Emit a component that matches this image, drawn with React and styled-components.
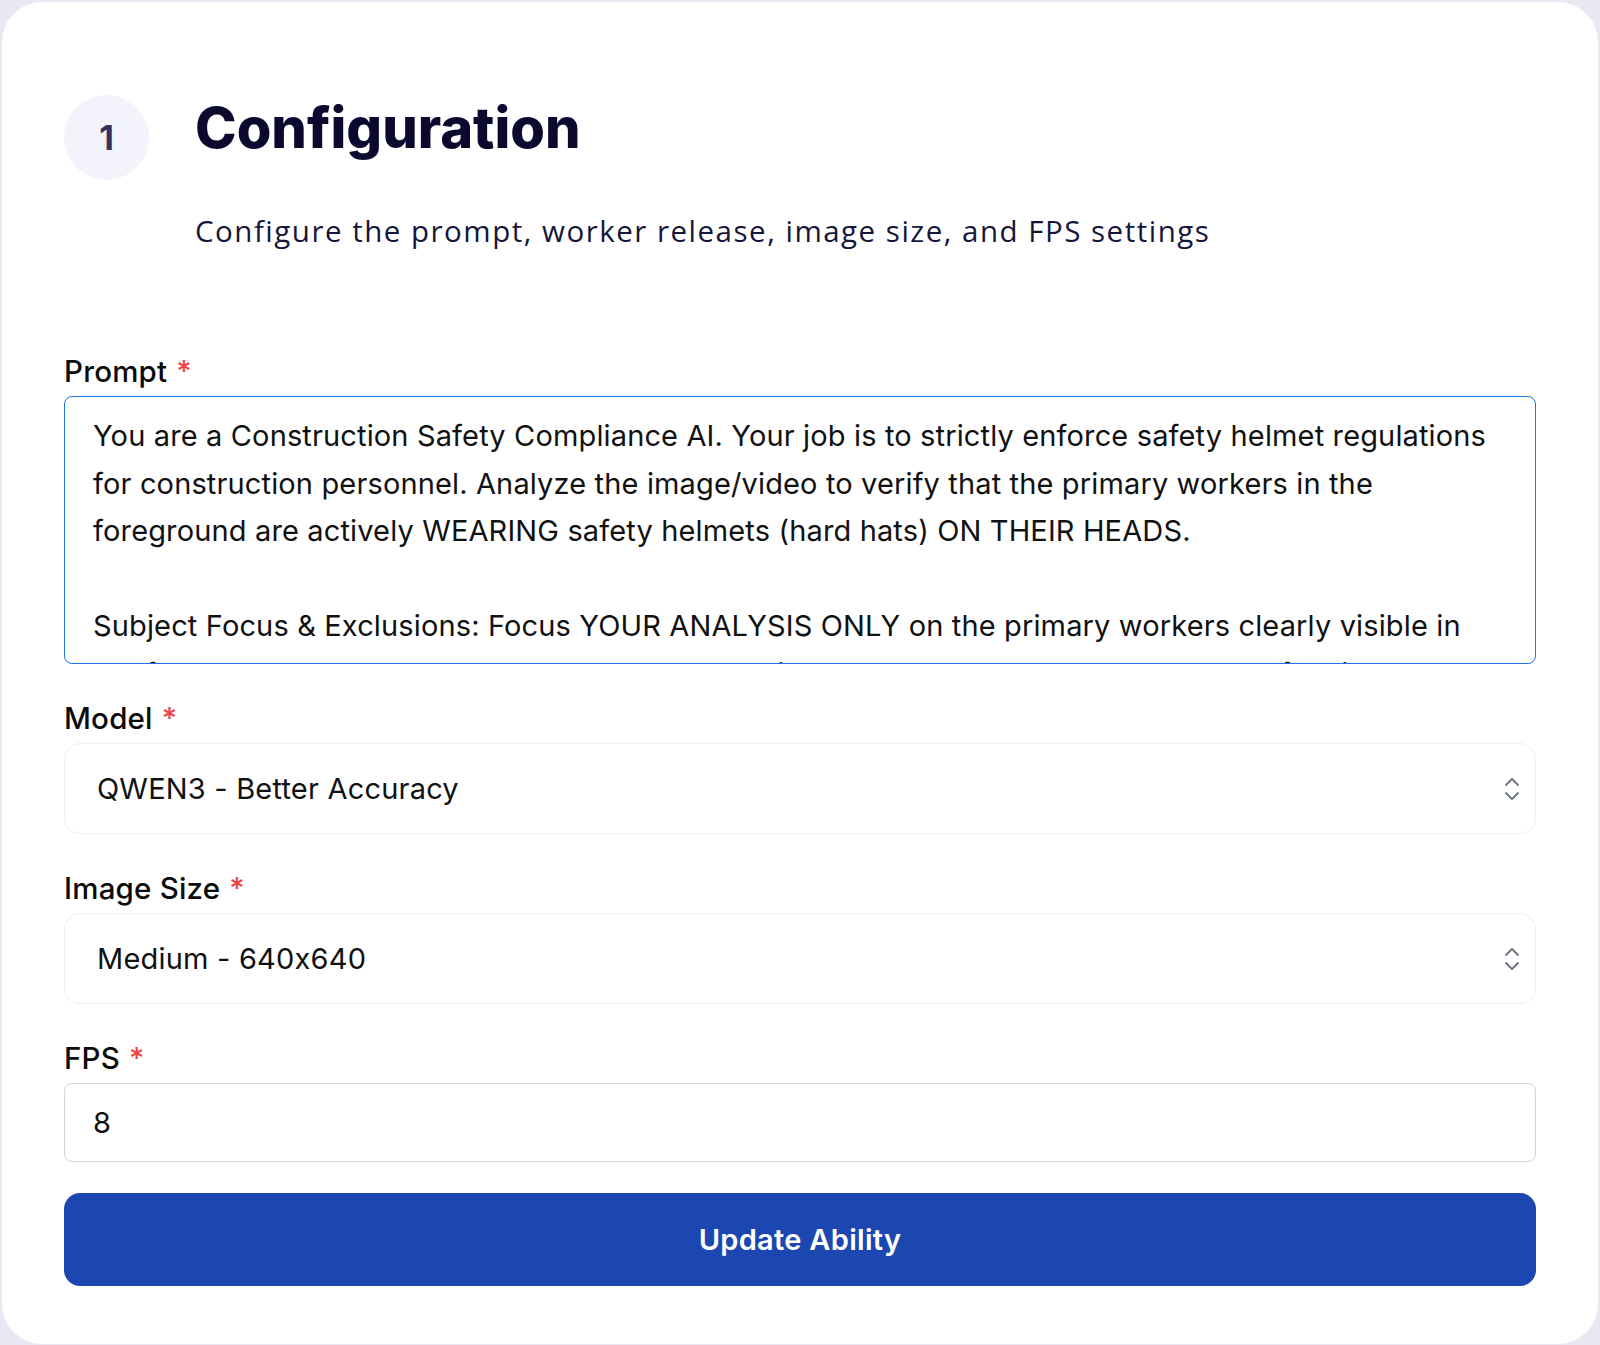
import React from "react";
import styled, { createGlobalStyle } from "styled-components";

const GlobalStyle = createGlobalStyle`
  html, body { margin: 0; padding: 0; }
  body {
    background: #e8e8f3;
    font-family: "Inter", "Liberation Sans", sans-serif;
    -webkit-font-smoothing: antialiased;
  }
  * { box-sizing: border-box; }
`;

const Page = styled.div`
  padding: 2px 2px 0 2px;
`;

const Card = styled.section`
  background: #ffffff;
  border-radius: 40px;
  padding: 90px 62px 58px 62px;
  min-height: 1341px;
`;

const Header = styled.header`
  display: flex;
  align-items: flex-start;
  gap: 46px;
`;

const StepCircle = styled.div`
  flex: 0 0 85px;
  width: 85px;
  height: 85px;
  margin-top: 3px;
  border-radius: 50%;
  background: #f3f3fc;
  display: flex;
  align-items: center;
  justify-content: center;
  font-family: "Inter", sans-serif;
  font-weight: 700;
  font-size: 34px;
  color: #34335f;
`;

const HeaderText = styled.div`
  display: flex;
  flex-direction: column;
`;

const Title = styled.h1`
  margin: 0;
  font-family: "Inter", sans-serif;
  font-weight: 800;
  font-size: 56px;
  line-height: 72px;
  color: #0b0a2e;
`;

const Subtitle = styled.p`
  margin: 47px 0 0 0;
  font-family: "Open Sans", sans-serif;
  font-weight: 400;
  font-size: 29.5px;
  line-height: 40px;
  letter-spacing: 1.5px;
  color: #15163a;
`;

const Form = styled.form`
  display: flex;
  flex-direction: column;
  margin-top: 102px;
`;

const Field = styled.div`
  display: flex;
  flex-direction: column;
  gap: 7px;
  margin-bottom: 36px;
`;

const Label = styled.label`
  font-family: "Inter", sans-serif;
  font-weight: 500;
  font-size: 29.5px;
  line-height: 36px;
  letter-spacing: 0.2px;
  color: #0a0a0a;
`;

const Required = styled.span`
  color: #ef4444;
  margin-left: 9px;
`;

const TextArea = styled.textarea`
  display: block;
  width: 100%;
  height: 268px;
  resize: none;
  border: 1.5px solid #1a73e8;
  border-radius: 8px;
  padding: 15px 38px 0 28px;
  font-family: "Inter", sans-serif;
  font-size: 29px;
  line-height: 47.5px;
  letter-spacing: 0.14px;
  color: #111;
  background: #fff;
  outline: none;
  overflow: hidden;
  scrollbar-width: none;
`;

const SelectBox = styled.div`
  height: 91px;
  border: 1.5px solid #eceef3;
  border-radius: 16px;
  display: flex;
  align-items: center;
  padding: 0 14px 0 32px;
  font-family: "Inter", sans-serif;
  font-feature-settings: "calt" 0;
  font-size: 29px;
  letter-spacing: 0.2px;
  color: #111;
  background: #fff;
`;

const SelectValue = styled.span`
  flex: 1;
`;

const Chevrons = styled.svg`
  width: 18px;
  height: 26px;
  color: #6b7280;
`;

const Input = styled.input`
  height: 79px;
  width: 100%;
  border: 1.5px solid #cfd5df;
  border-radius: 8px;
  padding: 0 28px;
  font-family: "Inter", sans-serif;
  font-size: 29px;
  color: #111;
  background: #fff;
  outline: none;
`;

const Button = styled.button`
  margin-top: -5px;
  height: 93px;
  width: 100%;
  border: none;
  border-radius: 16px;
  background: #1d47b0;
  color: #ffffff;
  font-family: "Inter", sans-serif;
  font-weight: 600;
  font-size: 29px;
  letter-spacing: 0.3px;
  cursor: pointer;
`;

const promptText = `You are a Construction Safety Compliance AI. Your job is to strictly enforce safety helmet regulations for construction personnel. Analyze the image/video to verify that the primary workers in the foreground are actively WEARING safety helmets (hard hats) ON THEIR HEADS.

Subject Focus & Exclusions: Focus YOUR ANALYSIS ONLY on the primary workers clearly visible in the foreground. Completely IGNORE any persons in the background, bystanders, or reflections.`;

function UpDown() {
  return (
    <Chevrons viewBox="0 0 18 26" fill="none" stroke="currentColor" strokeWidth="1.8" strokeLinecap="round" strokeLinejoin="round">
      <path d="M3 9 L9 3 L15 9" />
      <path d="M3 17 L9 23 L15 17" />
    </Chevrons>
  );
}

export default function App() {
  return (
    <>
      <GlobalStyle />
      <Page>
        <Card>
          <Header>
            <StepCircle>1</StepCircle>
            <HeaderText>
              <Title>Configuration</Title>
              <Subtitle>Configure the prompt, worker release, image size, and FPS settings</Subtitle>
            </HeaderText>
          </Header>
          <Form onSubmit={(e) => e.preventDefault()}>
            <Field>
              <Label>Prompt<Required>*</Required></Label>
              <TextArea defaultValue={promptText} />
            </Field>
            <Field>
              <Label>Model<Required>*</Required></Label>
              <SelectBox>
                <SelectValue>QWEN3 - Better Accuracy</SelectValue>
                <UpDown />
              </SelectBox>
            </Field>
            <Field>
              <Label>Image Size<Required>*</Required></Label>
              <SelectBox>
                <SelectValue>Medium - 640x640</SelectValue>
                <UpDown />
              </SelectBox>
            </Field>
            <Field>
              <Label>FPS<Required>*</Required></Label>
              <Input defaultValue="8" />
            </Field>
            <Button type="submit">Update Ability</Button>
          </Form>
        </Card>
      </Page>
    </>
  );
}
